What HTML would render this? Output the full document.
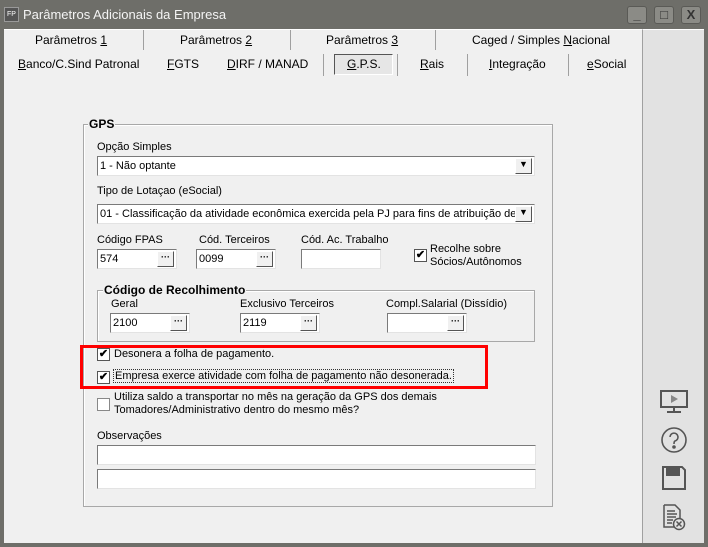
<!DOCTYPE html>
<html><head><meta charset="utf-8"><style>
*{box-sizing:border-box;margin:0;padding:0}
body{width:708px;height:547px;background:#6e6e69;font-family:"Liberation Sans",sans-serif;font-size:11px;color:#000;position:relative;overflow:hidden}
.a{position:absolute}
.title{left:23px;top:7px;color:#f4f4f4;font-size:13px}
.wb{top:6px;width:20px;height:18px;background:#8b8b86;border:1px solid #5a5a56;border-radius:3px;color:#333;font-weight:bold;text-align:center;font-size:13px;line-height:16px}
.main{left:4px;top:29px;width:638px;height:514px;background:#f0f0f0;border-top:1px solid #fff}
.side{left:642px;top:29px;width:62px;height:514px;background:#e2e2e2;border-left:1px solid #a0a0a0;border-top:1px solid #fff}
.tab{white-space:nowrap;font-size:12px}
.sep{width:1px;background:#a0a0a0}
.inp{background:#fff;border:1px solid;border-color:#7a7a7a #e3e3e3 #e3e3e3 #7a7a7a;height:20px;padding:3px 2px;white-space:nowrap;overflow:hidden}
.btn{position:absolute;right:2px;top:1px;width:17px;height:16px;background:#f0f0f0;border:1px solid;border-color:#fff #555 #555 #fff;font-size:9px;text-align:center;line-height:10px;font-weight:bold}
.cb{width:13px;height:13px;border:1px solid #555;background:#fff;font-size:11px;line-height:11px;text-align:center;font-weight:bold}
.grp{border:1px solid #a8a8a8;box-shadow:1px 1px 0 #fff inset}
.gl{background:#f0f0f0;font-weight:bold;padding:0 1px;font-size:12px}
</style></head><body>
<div class="a" style="left:4px;top:7px;width:15px;height:15px;background:#555;border:1px solid #999;color:#fff;font-size:7px;line-height:13px;text-align:center">FP</div>
<div class="a title">Parâmetros Adicionais da Empresa</div>
<div class="a wb" style="left:627px">_</div>
<div class="a wb" style="left:654px">□</div>
<div class="a wb" style="left:681px">X</div>
<div class="a main"></div>
<div class="a side"></div>
<div class="a tab" style="left:35px;top:33px">Parâmetros <u>1</u></div>
<div class="a sep" style="left:143px;top:30px;height:20px"></div>
<div class="a tab" style="left:180px;top:33px">Parâmetros <u>2</u></div>
<div class="a sep" style="left:290px;top:30px;height:20px"></div>
<div class="a tab" style="left:326px;top:33px">Parâmetros <u>3</u></div>
<div class="a sep" style="left:435px;top:30px;height:20px"></div>
<div class="a tab" style="left:472px;top:33px">Caged / Simples <u>N</u>acional</div>
<div class="a tab" style="left:18px;top:57px"><u>B</u>anco/C.Sind Patronal</div>
<div class="a tab" style="left:167px;top:57px"><u>F</u>GTS</div>
<div class="a tab" style="left:227px;top:57px"><u>D</u>IRF / MANAD</div>
<div class="a sep" style="left:323px;top:54px;height:22px"></div>
<div class="a" style="left:334px;top:54px;width:59px;height:21px;border:1px solid;border-color:#555 #fff #fff #555;background:#e6e6e6"></div>
<div class="a tab" style="left:347px;top:57px"><u>G</u>.P.S.</div>
<div class="a sep" style="left:397px;top:54px;height:22px"></div>
<div class="a tab" style="left:420px;top:57px"><u>R</u>ais</div>
<div class="a sep" style="left:467px;top:54px;height:22px"></div>
<div class="a tab" style="left:489px;top:57px"><u>I</u>ntegração</div>
<div class="a sep" style="left:568px;top:54px;height:22px"></div>
<div class="a tab" style="left:587px;top:57px"><u>e</u>Social</div>
<div class="a grp" style="left:83px;top:124px;width:470px;height:383px"></div>
<div class="a gl" style="left:88px;top:117px">GPS</div>
<div class="a" style="left:97px;top:141px">Opção Simples</div>
<div class="a inp" style="left:97px;top:156px;width:438px">1 - Não optante<div class="btn">▼</div></div>
<div class="a" style="left:97px;top:185px">Tipo de Lotaçao (eSocial)</div>
<div class="a inp" style="left:97px;top:204px;width:438px">01 - Classificação da atividade econômica exercida pela PJ para fins de atribuição de có<div class="btn">▼</div></div>
<div class="a" style="left:97px;top:234px">Código FPAS</div>
<div class="a inp" style="left:97px;top:249px;width:80px">574<div class="btn">···</div></div>
<div class="a" style="left:199px;top:234px">Cód. Terceiros</div>
<div class="a inp" style="left:196px;top:249px;width:80px">0099<div class="btn">···</div></div>
<div class="a" style="left:301px;top:234px">Cód. Ac. Trabalho</div>
<div class="a inp" style="left:301px;top:249px;width:80px"></div>
<div class="a cb" style="left:414px;top:249px">✔</div>
<div class="a" style="left:430px;top:243px;line-height:13px">Recolhe sobre<br>Sócios/Autônomos</div>
<div class="a grp" style="left:97px;top:290px;width:438px;height:52px"></div>
<div class="a gl" style="left:103px;top:283px">Código de Recolhimento</div>
<div class="a" style="left:111px;top:298px">Geral</div>
<div class="a inp" style="left:110px;top:313px;width:80px">2100<div class="btn">···</div></div>
<div class="a" style="left:240px;top:298px">Exclusivo Terceiros</div>
<div class="a inp" style="left:240px;top:313px;width:80px">2119<div class="btn">···</div></div>
<div class="a" style="left:386px;top:298px">Compl.Salarial (Dissídio)</div>
<div class="a inp" style="left:387px;top:313px;width:80px"><div class="btn">···</div></div>
<div class="a" style="left:80px;top:345px;width:408px;height:44px;border:3px solid #f00"></div>
<div class="a cb" style="left:97px;top:348px">✔</div>
<div class="a" style="left:114px;top:348px">Desonera a folha de pagamento.</div>
<div class="a cb" style="left:97px;top:371px">✔</div>
<div class="a" style="left:113px;top:369px;border:1px dotted #333;padding:0 1px">Empresa exerce atividade com folha de pagamento não desonerada.</div>
<div class="a cb" style="left:97px;top:398px;border-color:#888"></div>
<div class="a" style="left:114px;top:391px;line-height:13px">Utiliza saldo a transportar no mês na geração da GPS dos demais<br>Tomadores/Administrativo dentro do mesmo mês?</div>
<div class="a" style="left:97px;top:430px">Observações</div>
<div class="a inp" style="left:97px;top:445px;width:439px"></div>
<div class="a inp" style="left:97px;top:469px;width:439px"></div>
<svg class="a" style="left:658px;top:389px" width="32" height="26" viewBox="0 0 32 26" fill="none" stroke="#555" stroke-width="2"><rect x="3" y="2" width="26" height="16"/><path d="M16 18v4M9 23h14"/><path d="M13 6l7 4-7 4z" fill="#888" stroke="none"/></svg>
<svg class="a" style="left:660px;top:426px" width="28" height="28" viewBox="0 0 28 28" fill="none" stroke="#555" stroke-width="1.6"><circle cx="14" cy="14" r="12"/><path d="M10 11a4 4 0 1 1 5 4c-1 .5-1 1.5-1 3"/><circle cx="14" cy="21" r="1" fill="#555"/></svg>
<svg class="a" style="left:661px;top:465px" width="26" height="26" viewBox="0 0 26 26" fill="none" stroke="#555" stroke-width="2"><path d="M2 2h19l3 3v19H2z"/><rect x="6" y="2" width="12" height="8" fill="#555"/></svg>
<svg class="a" style="left:661px;top:503px" width="26" height="28" viewBox="0 0 26 28" fill="none" stroke="#555" stroke-width="1.5"><path d="M3 2h11l5 5v10M3 2v22h10"/><path d="M6 8h8M6 11h10M6 14h9M6 17h6M6 20h5"/><circle cx="18" cy="21" r="5.5" fill="#e2e2e2"/><path d="M15.5 18.5l5 5M20.5 18.5l-5 5"/></svg>
</body></html>
